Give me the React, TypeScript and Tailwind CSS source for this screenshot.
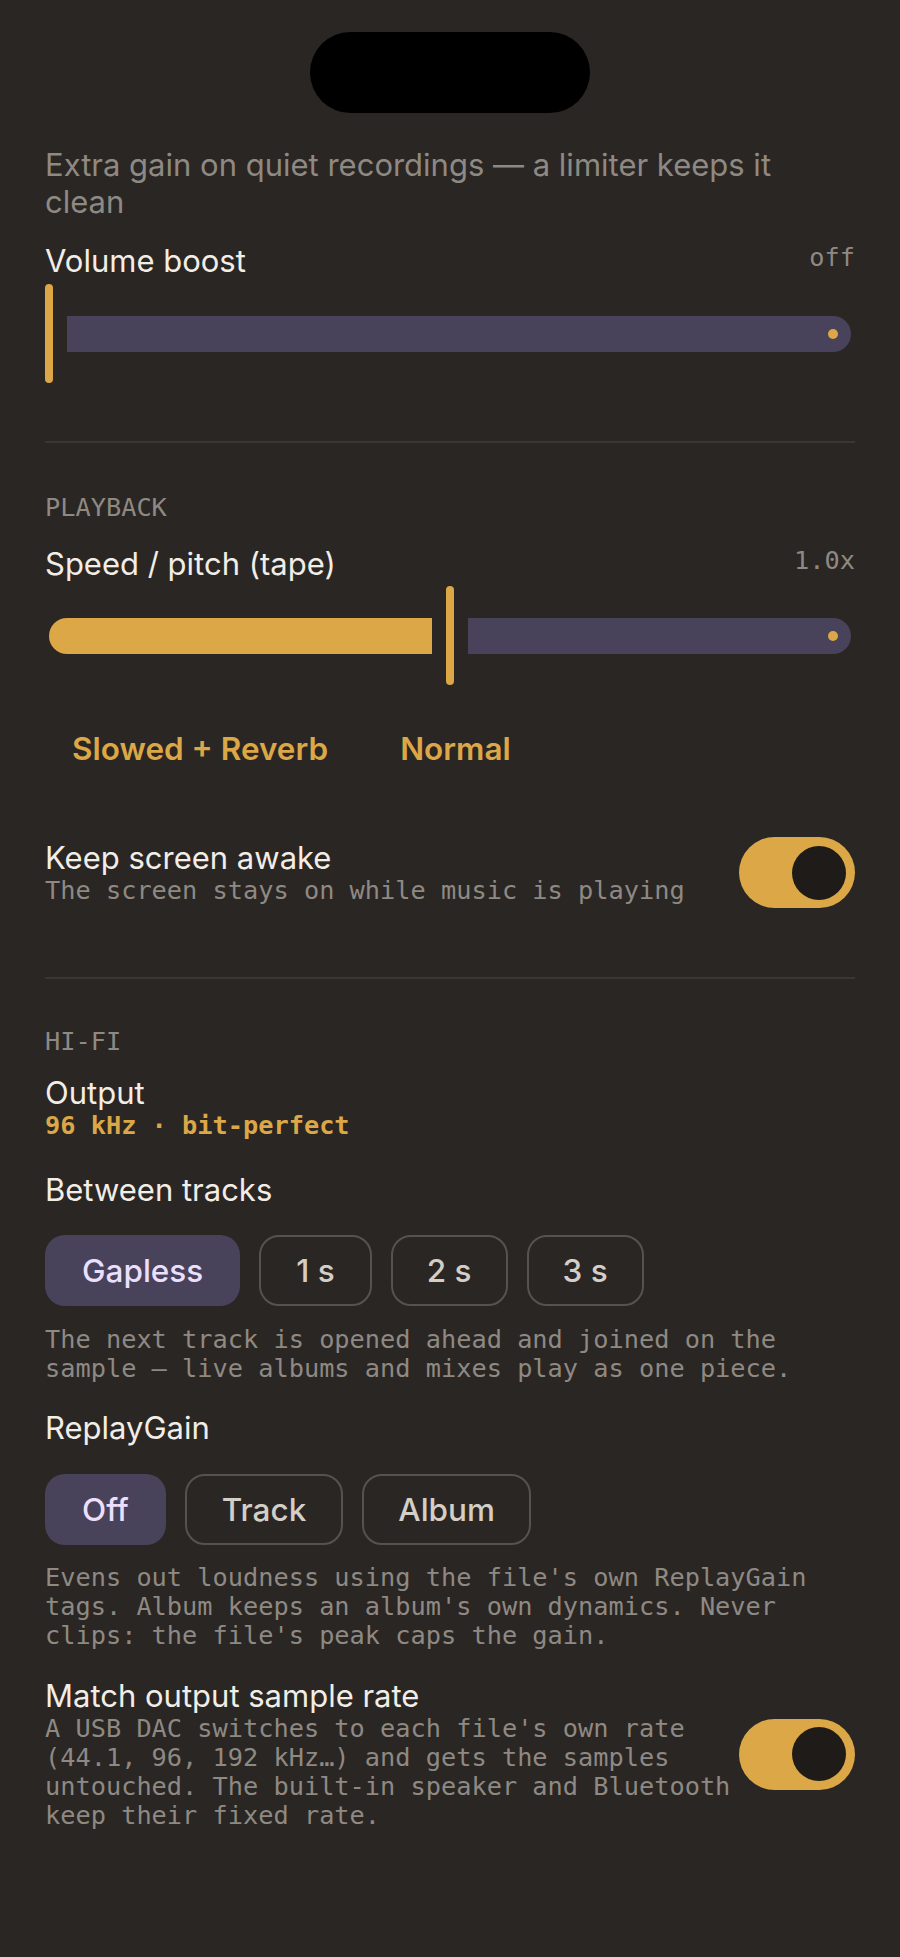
import React from "react";

const sans = { fontFamily: "Inter, 'Noto Sans', sans-serif" } as const;
const mono = { fontFamily: "'DejaVu Sans Mono', 'Liberation Mono', monospace" } as const;

function Toggle() {
  return (
    <div className="flex h-[71px] w-[116px] shrink-0 items-center justify-end rounded-full bg-[#dca746] pr-[9px]">
      <div className="h-[54px] w-[54px] rounded-full bg-[#1e1b19]" />
    </div>
  );
}

function Dot() {
  return <div className="absolute right-[13px] top-1/2 h-[10px] w-[10px] -translate-y-1/2 rounded-full bg-[#dca746]" />;
}

function Seg({ items, selected }: { items: { label: string; px: string }[]; selected: number }) {
  return (
    <div className="flex gap-[19px]">
      {items.map((it, i) =>
        i === selected ? (
          <div
            key={it.label}
            className={`flex h-[71px] items-center rounded-[20px] bg-[#48435a] text-[31.5px] font-medium text-[#eadffc] ${it.px}`}
          >
            {it.label}
          </div>
        ) : (
          <div
            key={it.label}
            className={`flex h-[71px] items-center rounded-[20px] border-2 border-[#57524d] text-[31.5px] font-medium text-[#d4cec7] ${it.px}`}
          >
            {it.label}
          </div>
        )
      )}
    </div>
  );
}

export default function App() {
  return (
    <div className="min-h-[1957px] w-full bg-[#2a2623] px-[45px] pt-[32px]" style={sans}>
      <div className="mx-auto h-[81px] w-[280px] rounded-full bg-black" />

      <p className="mt-[33px] max-w-[770px] text-[31px] leading-[37px] text-[#8f8983]">
        Extra gain on quiet recordings — a limiter keeps it clean
      </p>

      {/* Volume boost */}
      <div className="mt-[23px] flex items-start justify-between">
        <span className="text-[31px] leading-[36px] text-[#f2ede6]">Volume boost</span>
        <span className="text-[25.3px] leading-[29px] text-[#8f8983]" style={mono}>
          off
        </span>
      </div>
      <div className="mt-[5px] flex h-[99px] items-center gap-[14px] pr-[4px]">
        <div className="h-[99px] w-[8px] rounded-full bg-[#dca746]" />
        <div className="relative h-[36px] flex-1 rounded-l-[5px] rounded-r-full bg-[#48435a]">
          <Dot />
        </div>
      </div>

      <div className="mt-[58px] h-[2px] bg-[#3a3633]" />

      {/* Playback */}
      <div className="mt-[50px] text-[25.3px] leading-[29px] text-[#8f8983]" style={mono}>
        PLAYBACK
      </div>
      <div className="mt-[24px] flex items-start justify-between">
        <span className="text-[31px] leading-[36px] text-[#f2ede6]">Speed / pitch (tape)</span>
        <span className="text-[25.3px] leading-[29px] text-[#8f8983]" style={mono}>
          1.0x
        </span>
      </div>
      <div className="mt-[4px] flex h-[99px] items-center gap-[14px] px-[4px]">
        <div className="h-[36px] w-[383px] rounded-l-full rounded-r-[5px] bg-[#dca746]" />
        <div className="h-[99px] w-[8px] rounded-full bg-[#dca746]" />
        <div className="relative h-[36px] flex-1 rounded-l-[5px] rounded-r-full bg-[#48435a]">
          <Dot />
        </div>
      </div>

      <div className="mt-[46px] flex gap-[18px]">
        <span className="px-[27px] text-[31.5px] font-semibold leading-[36px] text-[#dca746]">Slowed + Reverb</span>
        <span className="px-[27px] text-[31.5px] font-semibold leading-[36px] text-[#dca746]">Normal</span>
      </div>

      <div className="mt-[70px] flex items-center justify-between gap-[20px]">
        <div>
          <div className="text-[31px] leading-[36px] text-[#f2ede6]">Keep screen awake</div>
          <div className="text-[25.3px] leading-[29px] text-[#8f8983]" style={mono}>
            The screen stays on while music is playing
          </div>
        </div>
        <Toggle />
      </div>

      <div className="mt-[69px] h-[2px] bg-[#3a3633]" />

      {/* Hi-Fi */}
      <div className="mt-[48px] text-[25.3px] leading-[29px] text-[#8f8983]" style={mono}>
        HI-FI
      </div>
      <div className="mt-[19px] text-[31px] leading-[36px] text-[#f2ede6]">Output</div>
      <div className="text-[25.3px] font-bold leading-[29px] text-[#dca746]" style={mono}>
        96 kHz · bit-perfect
      </div>

      <div className="mt-[32px] text-[31px] leading-[36px] text-[#f2ede6]">Between tracks</div>
      <div className="mt-[27px]">
        <Seg
          selected={0}
          items={[
            { label: "Gapless", px: "px-[37px]" },
            { label: "1 s", px: "px-[35px]" },
            { label: "2 s", px: "px-[34px]" },
            { label: "3 s", px: "px-[34px]" },
          ]}
        />
      </div>
      <p className="mt-[19px] text-[25.3px] leading-[29px] text-[#8f8983]" style={mono}>
        The next track is opened ahead and joined on the sample — live albums and mixes play as one piece.
      </p>

      <div className="mt-[27px] text-[31px] leading-[36px] text-[#f2ede6]">ReplayGain</div>
      <div className="mt-[28px]">
        <Seg
          selected={0}
          items={[
            { label: "Off", px: "px-[37px]" },
            { label: "Track", px: "px-[35px]" },
            { label: "Album", px: "px-[34px]" },
          ]}
        />
      </div>
      <p className="mt-[18px] text-[25.3px] leading-[29px] text-[#8f8983]" style={mono}>
        Evens out loudness using the file's own ReplayGain tags. Album keeps an album's own dynamics. Never clips: the
        file's peak caps the gain.
      </p>

      <div className="mt-[28px] flex items-center justify-between gap-[4px]">
        <div className="min-w-0 flex-1">
          <div className="text-[31px] leading-[36px] text-[#f2ede6]">Match output sample rate</div>
          <div className="text-[25.3px] leading-[29px] text-[#8f8983]" style={mono}>
            A USB DAC switches to each file's own rate (44.1, 96, 192 kHz…) and gets the samples untouched. The
            built-in speaker and Bluetooth keep their fixed rate.
          </div>
        </div>
        <Toggle />
      </div>
    </div>
  );
}
